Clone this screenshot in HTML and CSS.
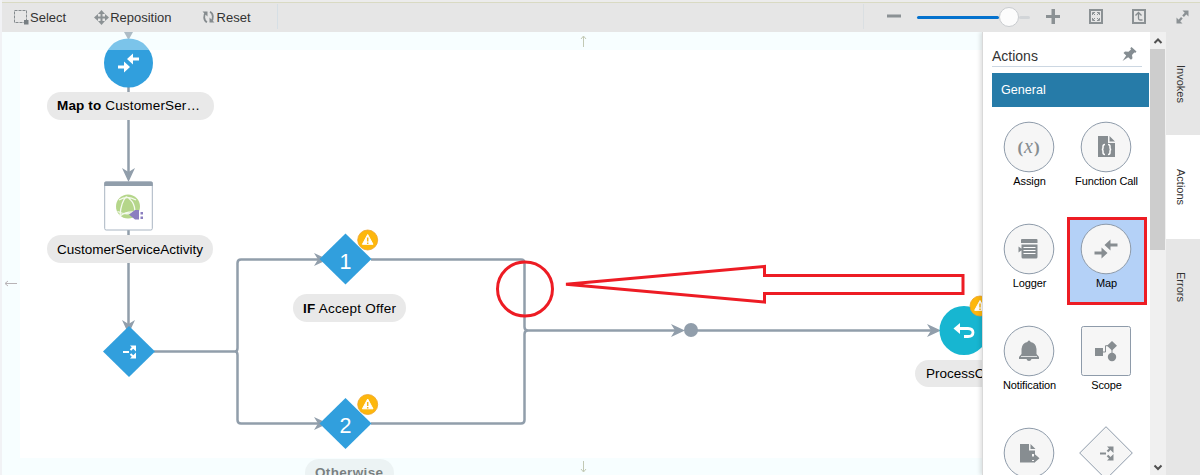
FILE: index.html
```html
<!DOCTYPE html>
<html lang="en">
<head>
<meta charset="utf-8">
<title>Integration designer</title>
<link rel="stylesheet" href="styles.css">
</head>
<body>
<header class="toolbar">
  <div class="tools">
    <button class="tool select"><svg width="15" height="16" viewBox="0 0 15 16"><rect x=".5" y="1.500" width="12" height="12" fill="none" stroke="#858b8e" stroke-dasharray="3 1"/><path d="M10 11h4.500v4.500H10z" fill="#777e82"/></svg><span>Select</span></button>
    <button class="tool move"><svg width="15" height="15" viewBox="0 0 15 15"><path d="M7.500 2v11M2 7.500h11" stroke="#8b9194" stroke-width="2"/><path d="M7.500 0l3.500 4h-7zM7.500 15l3.500-4h-7zM0 7.500l4-3.500v7zM15 7.500l-4-3.500v7z" fill="#8b9194"/></svg><span>Reposition</span></button>
    <button class="tool reset"><svg width="13" height="14" viewBox="0 0 13 14"><path d="M5 12.200C1.600 10.500 1.200 5 4 2.500M8 1.800C11.400 3.500 11.800 9 9 11.500" fill="none" stroke="#858b8e" stroke-width="1.800"/><path d="M.5 1.500h5v5zM12.500 12.500h-5v-5z" fill="#858b8e"/></svg><span>Reset</span></button>
  </div>
  <div class="zoombar">
    <svg class="minus" width="14" height="4"><path d="M0 .5h14v3H0z" fill="#8b9194"/></svg>
    <div class="slider"><div class="filled"></div><div class="knob"></div><div class="rest"></div></div>
    <svg class="plus" width="14" height="15"><path d="M0 6h14v3H0zM5.500 0H9v15H5.500z" fill="#8b9194"/></svg>
    <svg class="fit" width="14" height="15" viewBox="0 0 14 15"><path d="M1 1h12v13H1z" fill="none" stroke="#8b9194" stroke-width="2"/><path d="M3.500 6V3.500H6M8 3.500h2.500V6M3.500 9v2.500H6M8 11.500h2.500V9M4 4l2 2M10 4L8 6M4 11l2-2M10 11L8 9" fill="none" stroke="#8b9194"/></svg>
    <svg class="home" width="14" height="15" viewBox="0 0 14 15"><path d="M1 1h12v13H1z" fill="none" stroke="#8b9194" stroke-width="2"/><path d="M3.500 6.500L6.500 3.500l3 3M6.500 4v5.500q0 1.500 1.500 1.500h2.500" fill="none" stroke="#858b8e" stroke-width="1.300"/></svg>
    <svg class="full" width="13" height="14" viewBox="0 0 13 14"><path d="M2 12L11 2" stroke="#8b9194" stroke-width="2.300" stroke-dasharray="5.800 1.800"/><path d="M6.500.5H12.500V6.500zM.5 7.500v6h6z" fill="#8b9194"/></svg>
  </div>
</header>
<div class="workspace">
  <main class="canvas">
    <svg width="980" height="443" viewBox="2 32 980 443">
      <defs>
        <path id="head" d="M0 0L-14-6.500L-10 0L-14 6.500Z" fill="#919eab"/>
        <g id="warn"><circle r="10" fill="#fdb70d" stroke="#eda32b" stroke-width=".8"/><path d="M0-5.500L5.300 4.300H-5.300z" fill="#fff" stroke="#fff" stroke-linejoin="round"/><path d="M0-2.500V1.500M0 2.500V4" stroke="#f8b517" stroke-width="1.500"/></g>
      </defs>
      <g class="wire">
        <path d="M128.500 84V172M128.500 226V325M154 351.500H235Q237.500 351.500 237.500 348V263Q237.500 259.500 241 259.500H320M235 351.500Q237.500 351.500 237.500 355V420Q237.500 423.500 241 423.500H320M371 259.500H521Q524.500 259.500 524.500 263V327Q524.500 330.500 528 330.500H676M371 423.500H521Q524.500 423.500 524.500 420V334Q524.500 330.500 528 330.500M690 330.500H932"/>
      </g>
      <use href="#head" transform="translate(128.500 182) rotate(90)"/>
      <use href="#head" transform="translate(128.500 334) rotate(90)"/>
      <use href="#head" x="328" y="259.500"/><use href="#head" x="328" y="423.500"/>
      <use href="#head" x="685" y="330.500"/><use href="#head" x="941" y="330.500"/>
      <circle cx="691" cy="330" r="7" fill="#919eab"/>
      <path d="M124 32h9l-4.500 8z" fill="#8492a0"/>
      <circle cx="128.500" cy="63" r="24.500" fill="#319fdd"/>
      <path d="M127 59l6-5.500v4h6v3h-6v4zM130 67l-6-5.500v4h-6v3h6v4z" fill="#fff"/>
      <rect x="104.700" y="182" width="47.600" height="48" rx="1.500" fill="#fff" stroke="#a9b5c2"/>
      <path d="M104.200 186v-3q0-1.500 1.500-1.500h45.600q1.500 0 1.500 1.500v3z" fill="#919eab"/>
      <circle cx="128" cy="206.500" r="12" fill="#b5d68a"/>
      <path d="M120 215.500q1-14 6.500-19M126.500 197q10 5 8 19M117.500 211.500q10 5 20-.5M119 200q8-5 17 0M120 216q6-5 16-4" fill="none" stroke="#f5faef" stroke-width="1.300"/>
      <path d="M129 214.500l6-4.500h4v9.500h-4zM140.500 212h2.500v2.500h-2.500zM140.500 216.500h2.500v2.500h-2.500z" fill="#8b7fc0"/>
      <g fill="#319fdd"><path d="M129 326l26 25.500L129 377l-26-25.500z"/><path d="M345.500 233.500l26 25.500-26 25.500-26-25.500z"/><path d="M345.500 398l26 25.500-26 25.500-26-25.500z"/></g>
      <path d="M123 352h6M130.500 350l3-3M130.500 354l3 3" stroke="#fff" stroke-width="2"/><path d="M130 345.500h6v6zM130 358.500h6v-6z" fill="#fff"/>
      <text class="num" x="345.500" y="269">1</text><text class="num" x="345.500" y="433">2</text>
      <use href="#warn" x="367.700" y="240"/><use href="#warn" x="367.700" y="404.500"/>
      <circle cx="964" cy="330.500" r="24.500" fill="#17b6d1"/>
      <path d="M957 328.500h11q5 .2 5 4t-5 4h-4" fill="none" stroke="#fff" stroke-width="2.800"/><path d="M953.500 328.500l6.500-5.500v11z" fill="#fff"/>
      <use href="#warn" x="980" y="306"/>
      <g fill="#e9e9e9"><rect x="47" y="92" width="167" height="28" rx="14"/><rect x="47" y="235" width="166" height="28" rx="14"/><rect x="293" y="294" width="113" height="28" rx="14"/><rect x="305" y="459" width="89" height="28" rx="14"/><rect x="915" y="360" width="120" height="27" rx="13.500"/></g>
      <g class="label">
        <text x="57" y="110" textLength="143"><tspan class="bold">Map to</tspan> CustomerSer…</text>
        <text x="57" y="254" textLength="146">CustomerServiceActivity</text>
        <text x="303" y="313" textLength="93"><tspan class="bold">IF</tspan> Accept Offer</text>
        <text x="315" y="477" class="bold" textLength="68">Otherwise</text>
        <text x="926" y="378">ProcessOffer</text>
      </g>
      <g fill="#ebfdff" fill-opacity=".4"><path d="M2 32h980v18H2z"/><path d="M2 50h18v408H2z"/></g>
      <path d="M2 458h980v17H2z" fill="#f0fdff" fill-opacity=".5"/>
      <path d="M17 283.500H5.500M8 281l-3 2.500 3 2.500" fill="none" stroke="#b8b3b6"/>
      <path d="M583.500 47V36.500M581 39l2.500-3 2.500 3M583.500 461V471.500M581 469l2.500 3 2.500-3" fill="none" stroke="#c2c9b4"/>
      <g fill="none" stroke="#ed1c24" stroke-width="3"><ellipse cx="525" cy="289" rx="27.500" ry="27"/><path stroke-miterlimit="2" d="M566 284.300L764.500 266.500V275.500H963V293.500H764.500V302z"/></g>
    </svg>
  </main>
  <aside class="palette">
    <div class="head"><h2>Actions</h2><svg width="15" height="15" viewBox="0 0 15 15"><path d="M9.500 0l5 4.500-1 1.200-1.200-.3L10 8l.5 3.300L9 12.700l-2.800-2.500L.5 14l3.700-5.500L1.500 6 3 4.500l3.500.3L9 2.500 8.300 1.200z" fill="#858d92"/></svg></div>
    <div class="group">General</div>
    <div class="grid">
      <div class="item"><svg width="52" height="52" viewBox="0 0 52 52"><circle class="shape" cx="26" cy="26" r="24.800"/><text class="fx" x="26" y="31.500">(<tspan class="ital">x</tspan>)</text></svg><span>Assign</span></div>
      <div class="item"><svg width="52" height="52" viewBox="0 0 52 52"><circle class="shape" cx="26" cy="26" r="24.800"/><path class="ink" d="M18 15h10v7h7v14H18zM29.500 15l5.500 5.500h-5.500z"/><path d="M25 23.500q-2 0-2 2v1.500q0 1.500-1.200 1.500 1.200 0 1.200 1.500V31.500q0 2 2 2M28 23.500q2 0 2 2v1.500q0 1.500 1.200 1.500-1.200 0-1.200 1.500V31.500q0 2-2 2" fill="none" stroke="#fff" stroke-width="1.500"/></svg><span>Function Call</span></div>
      <div class="item"><svg width="52" height="52" viewBox="0 0 52 52"><circle class="shape" cx="26" cy="26" r="24.800"/><path class="ink" d="M18 17q0-1 1-1h14.500q1 0 1 1v3H18zM18.500 21.500h16V34q0 1.500-1.500 1.500H20q-1.500 0-1.500-1.500zM15.500 23.500l4 3-4 3z"/><path d="M20.500 24.500h12M20.500 27.500h12M20.500 30.500h12" stroke="#fff"/></svg><span>Logger</span></div>
      <div class="item chosen"><svg width="52" height="52" viewBox="0 0 52 52"><circle class="shape" cx="26" cy="26" r="24.800"/><path class="ink" d="M24.500 22l6-5.500v4h7v3h-7v4zM27.500 30l-6-5.500v4h-7v3h7v4z"/></svg><span>Map</span></div>
      <div class="item"><svg width="52" height="52" viewBox="0 0 52 52"><circle class="shape" cx="26" cy="26" r="24.800"/><path class="ink" d="M24.500 17q0-1.500 1.500-1.500t1.500 1.500q5.500 1 6 7v5l2.500 3v2H16v-2l2.500-3v-5q.5-6 6-7zM23.500 34h5q-.5 2-2.500 2t-2.500-2z"/><path d="M18 31.500h16" stroke="#f6f6f6" stroke-width=".8"/></svg><span>Notification</span></div>
      <div class="item"><svg width="52" height="52" viewBox="0 0 52 52"><rect class="shape" x="1.500" y="1.500" width="49" height="49" rx="2"/><path class="ink" d="M15 23h8v8h-8zM32 16l5 4.700-5 4.700-5-4.700z"/><circle class="ink" cx="32" cy="32" r="4.200"/><path d="M22 27h3.500v-6.300H29M32 24v5" fill="none" stroke="#878d91"/></svg><span>Scope</span></div>
      <div class="item"><svg width="52" height="52" viewBox="0 0 52 52"><circle class="shape" cx="26" cy="26" r="24.800"/><path class="ink" d="M17 17h9v6.500h6V27h-3v7h2v1.500H17zM27.500 17l5 5h-5zM27 29.500h4v-3l5.500 4.700-5.500 4.700v-3h-4z"/></svg></div>
      <div class="item"><svg class="wide" width="54" height="54" viewBox="0 0 54 54"><path class="shape" d="M27 .7L53.300 27 27 53.300.7 27z" stroke-linejoin="round"/><path d="M21 27.500h6M28.500 25.500l4-4M28.500 29.500l4 4" stroke="#878d91" stroke-width="2.200"/><path class="ink" d="M28 20.500h6.500v6.500zM28 34.500h6.500v-6.500z"/></svg></div>
    </div>
  </aside>
  <div class="scroll"><svg width="16" height="17"><path d="M4.500 11L8 7.500l3.500 3.500" fill="none" stroke="#505050" stroke-width="2"/></svg><div class="thumb"></div><svg class="down" width="16" height="17"><path d="M4.500 7.500L8 11l3.500-3.500" fill="none" stroke="#505050" stroke-width="2"/></svg></div>
  <nav class="tabs"><div class="tab invokes">Invokes</div><div class="tab active">Actions</div><div class="tab errors">Errors</div></nav>
</div>
</body>
</html>
```

FILE: styles.css
```css
* { box-sizing: border-box; }
body { margin: 0; width: 1200px; height: 475px; overflow: hidden; background: #f1f2f5; font-family: "Liberation Sans", Arial, sans-serif; color: #333; display: flex; flex-direction: column; }
svg { display: block; flex: none; }
.toolbar { height: 32px; border-top: 2px solid #ececec; margin-left: 2px; background: #e6e6e6; box-shadow: inset 0 1px #d9dac3; display: flex; padding-top: 1px; }
.tools { width: 276px; border-right: 1px solid #d6dfe5; display: flex; align-items: center; margin: 1px 0 3px; }
.tool { display: flex; align-items: center; border: 0; background: none; padding: 1px 0 0; font: 13px "Liberation Sans", Arial, sans-serif; color: #333; }
.select { margin-left: 12px; gap: 1px; }
.move { margin-left: 28px; gap: 1px; }
.reset { margin-left: 30px; gap: 2px; }
.zoombar { margin: 1px 0 3px auto; width: 337px; border-left: 1px solid #dadfe2; display: flex; align-items: center; }
.minus { margin: 0 0 1px 23px; }
.slider { width: 113px; margin-left: 16px; padding-top: 1px; display: flex; align-items: center; }
.filled { width: 82px; height: 3px; background: #0572ce; border-radius: 2px; }
.knob { width: 20px; height: 20px; border-radius: 50%; background: #fcfcfc; border: 1px solid #c9cccf; }
.rest { width: 11px; height: 3px; background: #d2d5d8; border-radius: 2px; }
.plus { margin-left: 16px; }
.fit, .home { margin-left: 29px; }
.full { margin-left: 30px; }
.workspace { flex: 1; display: flex; min-height: 0; padding-left: 2px; }
.canvas { width: 980px; background: #fff; overflow: hidden; }
.wire { fill: none; stroke: #919eab; stroke-width: 2.5; }
.label { font-size: 13.5px; fill: #000; }
.bold { font-weight: bold; }
.num { font: 21.5px "Liberation Sans", Arial, sans-serif; fill: #fff; text-anchor: middle; }
.palette { position: relative; width: 168px; background: #fff; border-left: 1px solid #d9d9d9; box-shadow: -2px 0 4px rgba(0,0,0,.12); padding: 11px 1px 0 9px; overflow: hidden; clip-path: inset(0 0 0 -6px); }
.head { width: 150px; height: 24px; border-bottom: 1px solid #ccd7e2; display: flex; justify-content: space-between; padding: 4px 5px 0 0; }
h2 { margin: 0; font-size: 14px; font-weight: normal; line-height: 19px; }
.group { margin-top: 6px; height: 34px; background: #267ba8; color: #fff; font-size: 12.6px; line-height: 34px; padding-left: 9px; }
.grid { display: grid; grid-template-columns: 76px 78px; grid-auto-rows: 88px; row-gap: 14px; margin: 8px 0 0 -1px; }
.item { display: flex; flex-direction: column; align-items: center; padding-top: 6px; font-size: 11px; letter-spacing: -.1px; color: #000; }
.item span { padding-left: 1px; line-height: 14px; margin-top: 1px; white-space: nowrap; }
.chosen { margin-right: -2px; border: 3px solid #ed1c24; background: #b4d1f7; padding: 3px 2px 0 0; }
.wide { margin-top: -1px; }
.shape { fill: #f6f6f6; stroke: #8e9baa; stroke-width: 1; }
.ink { fill: #878d91; }
.fx { font: bold 17px "Liberation Serif", serif; fill: #878d91; text-anchor: middle; letter-spacing: 1px; }
.ital { font-style: italic; font-weight: normal; font-size: 20px; }
.scroll { width: 16px; background: #f0f0f0; display: flex; flex-direction: column; }
.thumb { width: 15px; height: 201px; background: #cdcdcd; }
.down { margin-top: auto; }
.tabs { width: 34px; background: #e6e6e6; font-size: 11px; }
.tab { width: 34px; height: 104px; padding-right: 4px; writing-mode: vertical-rl; line-height: 30px; text-align: center; }
.invokes { height: 103px; }
.active { background: #fff; }
.errors { height: 95px; }
```
